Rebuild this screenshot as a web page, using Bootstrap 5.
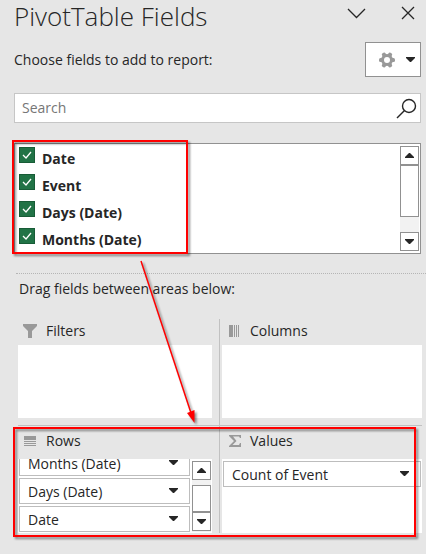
<!DOCTYPE html>
<html lang="en">
<head>
<meta charset="utf-8">
<meta name="viewport" content="width=device-width, initial-scale=1">
<title>PivotTable Fields</title>
<link href="https://cdn.jsdelivr.net/npm/bootstrap@5.3.0/dist/css/bootstrap.min.css" rel="stylesheet">
<style>
  body { background: #e6e6e6; color: #262626; font-family: "Open Sans", "Noto Sans", sans-serif; font-size: 14px; line-height: 20px; }
  svg { display: block; }
  .pane { padding: 0 5px 17px 14px; }
  .pane-title { font-size: 26px; font-weight: 300; line-height: 32px; }
  .plain { background: none; border: 0; padding: 0; color: #262626; }
  .window-tools { gap: 34px; padding: 0 5px 6px 0; }
  .tools { width: 56px; height: 35px; border: 1px solid #919191; background: #fff; padding: 0 5px 0 13px; }
  .top-row { margin-top: 10px; }
  .search { margin-top: 16px; height: 30px; background: #fff; border: 1px solid #c6c6c6; padding: 0 3px 0 7px; }
  .search input { border: 0; outline: 0; background: none; padding: 0; min-width: 0; line-height: 26px; }
  .search input::placeholder { color: #767676; opacity: 1; }
  .field-list { margin-top: 20px; background: #fff; border: 1px solid #919191; padding: 2px 1px 2px 4px; }
  .field { height: 27px; gap: 7px; font-weight: 700; }
  .field:last-child { height: 24px; }
  .field label { line-height: 25px; }
  .field .form-check-input { width: 16px; height: 16px; margin: 1px 0 0; border-radius: 0; border: 1px solid #185c37; background-color: #217346; flex: none; }
  .field .form-check-input:checked { background-color: #217346; border-color: #185c37; background-size: 14px 14px; background-image: url("data:image/svg+xml,%3Csvg xmlns='http://www.w3.org/2000/svg' viewBox='0 0 14 14'%3E%3Cpath d='M3 7l3 3 5-6' fill='none' stroke='white' stroke-width='1.3'/%3E%3C/svg%3E"); }
  .scroller { width: 19px; background: #f2f2f2; flex: none; }
  .scroller button { height: 19px; background: #fff; border: 1px solid #919191; padding: 0; }
  .thumb { background: #fff; border: 1px solid #919191; flex: none; }
  .thumb-tall { height: 52px; }
  .thumb-short { height: 27px; margin-top: 5px; }
  .divider { border-top: 1px dotted #b5b5b5; margin: 19px -5px 0 2px; }
  .hint { margin: 5px 0 0 5px; }
  .areas { margin: 20px 0 0 4px; display: grid; grid-template-columns: 202px 1fr; }
  .area-left { padding-right: 7px; border-right: 1px solid #c1c1c1; }
  .area-right { padding-left: 2px; margin-right: -1px; }
  .area-head { height: 26px; padding: 0 0 2px 5px; gap: 8px; }
  .area-right .area-head { padding-left: 7px; gap: 6px; }
  .lower .area-head { height: 33px; padding-bottom: 3px; }
  .icon-cell { width: 15px; flex: none; }
  .drop { background: #fff; height: 73px; }
  .upper { padding-bottom: 7px; }
  .rule { grid-column: 1 / -1; height: 1px; background: #c1c1c1; margin-right: -1px; }
  .lower .drop { height: 74px; padding: 2px 1px 1px; overflow: hidden; gap: 2px; }
  .pill { height: 26px; flex: none; width: 100%; border: 1px solid #bdbdbd; background: #fff; color: #262626; padding: 1px 11px 0 8px; line-height: 22px; }
  .pill svg { margin-top: -3px; }
  .stack { gap: 2px; margin-top: -2px; }
  .notes { z-index: 5; pointer-events: none; filter: drop-shadow(2px 2px 1px rgba(0,0,0,.45)); }
</style>
</head>
<body>
<main class="pane position-relative">
  <header class="d-flex justify-content-between align-items-center">
    <h1 class="pane-title m-0">PivotTable Fields</h1>
    <div class="window-tools d-flex align-items-center">
      <button class="plain" type="button" aria-label="Pane options"><svg width="19" height="14" viewBox="0 0 19 14" fill="none" stroke="#262626" stroke-width="1.3"><path d="M1 3l8.500 8.500L18 3"/></svg></button>
      <button class="plain" type="button" aria-label="Close"><svg width="16" height="14" viewBox="0 0 16 14" fill="none" stroke="#262626" stroke-width="1.3"><path d="M2 1l12 12M14 1L2 13"/></svg></button>
    </div>
  </header>

  <div class="top-row d-flex justify-content-between align-items-center">
    <span>Choose fields to add to report:</span>
    <button class="tools d-flex align-items-center justify-content-between" type="button" aria-label="Tools">
      <svg width="16" height="16" viewBox="0 0 16 16"><g fill="#999"><circle cx="8" cy="8" r="6"/><rect x="0" y="6" width="16" height="4" rx="1.500"/><rect x="0" y="6" width="16" height="4" rx="1.500" transform="rotate(60 8 8)"/><rect x="0" y="6" width="16" height="4" rx="1.500" transform="rotate(120 8 8)"/></g><circle cx="8" cy="8" r="3" fill="#fff"/></svg>
      <svg width="9" height="6" viewBox="0 0 9 6"><path d="M0 0h9v1L5 5H4L0 1z" fill="#262626"/></svg>
    </button>
  </div>

  <div class="search d-flex align-items-center">
    <input class="flex-grow-1" type="text" placeholder="Search" aria-label="Search">
    <button class="plain" type="button" aria-label="Search fields"><svg width="21" height="21" viewBox="0 0 21 21" fill="none" stroke="#262626" stroke-width="1.400"><circle cx="13" cy="8" r="6.500"/><path d="M8.500 12.500L1 20"/></svg></button>
  </div>

  <div class="field-list d-flex justify-content-between">
    <div>
      <div class="field d-flex"><input class="form-check-input" type="checkbox" id="f-date" checked><label for="f-date">Date</label></div>
      <div class="field d-flex"><input class="form-check-input" type="checkbox" id="f-event" checked><label for="f-event">Event</label></div>
      <div class="field d-flex"><input class="form-check-input" type="checkbox" id="f-days" checked><label for="f-days">Days (Date)</label></div>
      <div class="field d-flex"><input class="form-check-input" type="checkbox" id="f-months" checked><label for="f-months">Months (Date)</label></div>
    </div>
    <div class="scroller d-flex flex-column">
      <button class="d-flex align-items-center justify-content-center" type="button" aria-label="Scroll up"><svg width="9" height="5" viewBox="0 0 9 5"><path d="M0 5V4L4 0h1l4 4v1z" fill="#262626"/></svg></button>
      <div class="thumb thumb-tall"></div>
      <button class="mt-auto d-flex align-items-center justify-content-center" type="button" aria-label="Scroll down"><svg width="9" height="5" viewBox="0 0 9 5"><path d="M0 0h9v1L5 5H4L0 1z" fill="#262626"/></svg></button>
    </div>
  </div>

  <div class="divider"></div>
  <p class="hint">Drag fields between areas below:</p>

  <div class="areas">
    <section class="area-left upper">
      <div class="area-head d-flex align-items-center">
        <div class="icon-cell"><svg width="14" height="14" viewBox="0 0 14 14"><path d="M0 0h14v2L9 7v7H5V7L0 2z" fill="#999"/></svg></div><span>Filters</span>
      </div>
      <div class="drop"></div>
    </section>
    <section class="area-right upper">
      <div class="area-head d-flex align-items-center">
        <div class="icon-cell"><svg width="10" height="12" viewBox="0 0 10 12"><path d="M0 0h4v12H0zM5 0h1v12H5zM7 0h1v12H7zM9 0h1v12H9z" fill="#999"/></svg></div><span>Columns</span>
      </div>
      <div class="drop"></div>
    </section>
    <div class="rule"></div>
    <section class="area-left lower">
      <div class="area-head d-flex align-items-center">
        <div class="icon-cell"><svg width="13" height="10" viewBox="0 0 13 10"><path d="M1 0h12v4H1zM1 5h12v1H1zM1 7h12v1H1zM1 9h12v1H1z" fill="#999"/></svg></div><span>Rows</span>
      </div>
      <div class="drop d-flex">
        <div class="stack flex-grow-1 d-flex flex-column justify-content-end">
          <button class="pill d-flex align-items-center justify-content-between" type="button"><span>Months (Date)</span><svg width="9" height="5" viewBox="0 0 9 5"><path d="M0 0h9v1L5 5H4L0 1z" fill="#262626"/></svg></button>
          <button class="pill d-flex align-items-center justify-content-between" type="button"><span>Days (Date)</span><svg width="9" height="5" viewBox="0 0 9 5"><path d="M0 0h9v1L5 5H4L0 1z" fill="#262626"/></svg></button>
          <button class="pill d-flex align-items-center justify-content-between" type="button"><span>Date</span><svg width="9" height="5" viewBox="0 0 9 5"><path d="M0 0h9v1L5 5H4L0 1z" fill="#262626"/></svg></button>
        </div>
        <div class="scroller d-flex flex-column">
          <button class="d-flex align-items-center justify-content-center" type="button" aria-label="Scroll up"><svg width="9" height="5" viewBox="0 0 9 5"><path d="M0 5V4L4 0h1l4 4v1z" fill="#262626"/></svg></button>
          <div class="thumb thumb-short"></div>
          <button class="d-flex align-items-center justify-content-center" type="button" aria-label="Scroll down"><svg width="9" height="5" viewBox="0 0 9 5"><path d="M0 0h9v1L5 5H4L0 1z" fill="#262626"/></svg></button>
        </div>
      </div>
    </section>
    <section class="area-right lower">
      <div class="area-head d-flex align-items-center">
        <div class="icon-cell"><svg width="12" height="12" viewBox="0 0 12 12"><path d="M0 0h12v3h-1l-1-1.500H4L7.500 6 3.500 10H10l1-2h1v4H0v-1l5-5L0 1z" fill="#999"/></svg></div><span>Values</span>
      </div>
      <div class="drop">
        <button class="pill d-flex align-items-center justify-content-between" type="button"><span>Count of Event</span><svg width="9" height="5" viewBox="0 0 9 5"><path d="M0 0h9v1L5 5H4L0 1z" fill="#262626"/></svg></button>
      </div>
    </section>
  </div>

  <!-- callout frames and arrow drawn over the pane -->
  <svg class="notes position-absolute top-0 start-0" width="426" height="554" viewBox="0 0 426 554" aria-hidden="true">
    <g fill="none" stroke="#f00" stroke-width="2">
      <rect x="13" y="141" width="174" height="112"/>
      <rect x="14" y="428" width="401" height="108"/>
      <path d="M141 261L191 413" stroke-width="1.500"/>
    </g>
    <path d="M194.500 423L187 413l7.500-3z" fill="#f00"/>
  </svg>
</main>
<script src="https://cdn.jsdelivr.net/npm/bootstrap@5.3.0/dist/js/bootstrap.bundle.min.js"></script>
</body>
</html>
